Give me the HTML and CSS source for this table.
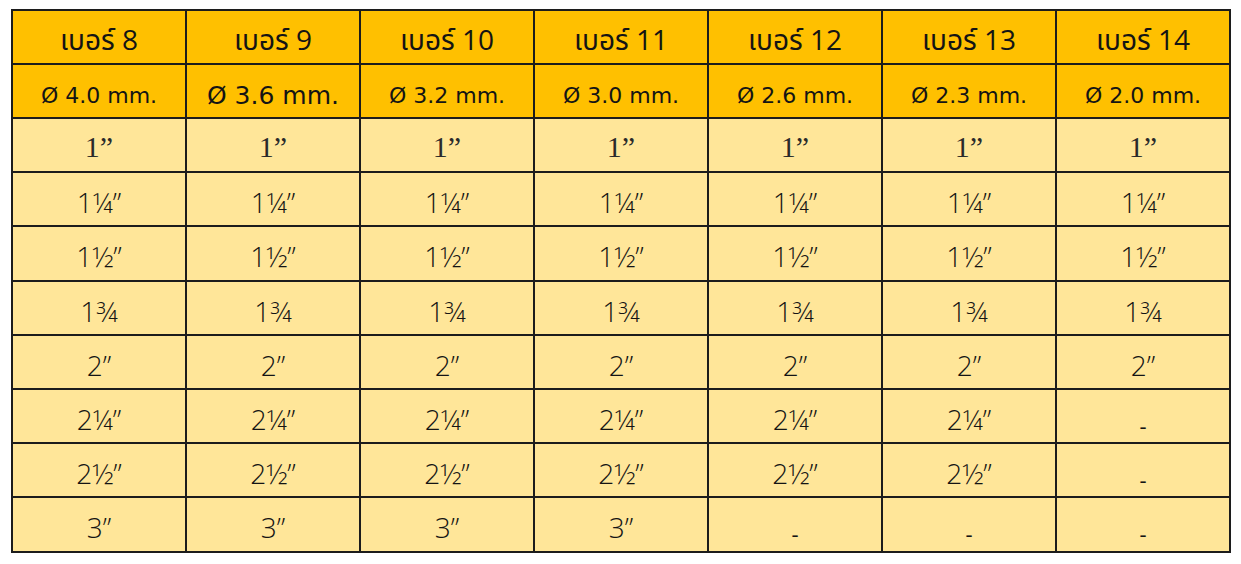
FILE: index.html
```html
<!DOCTYPE html>
<html lang="th">
<head>
<meta charset="utf-8">
<link rel="stylesheet" href="styles.css">
</head>
<body>
<table class="sizes">
  <colgroup>
    <col class="c"><col class="c"><col class="c"><col class="c"><col class="c"><col class="c"><col class="c">
  </colgroup>
  <thead>
    <tr class="num">
      <th>เบอร์ 8</th><th>เบอร์ 9</th><th>เบอร์ 10</th><th>เบอร์ 11</th><th>เบอร์ 12</th><th>เบอร์ 13</th><th>เบอร์ 14</th>
    </tr>
    <tr class="dia">
      <th>Ø 4.0 mm.</th><th class="big">Ø 3.6 mm.</th><th>Ø 3.2 mm.</th><th>Ø 3.0 mm.</th><th>Ø 2.6 mm.</th><th>Ø 2.3 mm.</th><th>Ø 2.0 mm.</th>
    </tr>
  </thead>
  <tbody>
    <tr><td class="serif">1”</td><td class="serif">1”</td><td class="serif">1”</td><td class="serif">1”</td><td class="serif">1”</td><td class="serif">1”</td><td class="serif">1”</td></tr>
    <tr><td>1¼”</td><td>1¼”</td><td>1¼”</td><td>1¼”</td><td>1¼”</td><td>1¼”</td><td>1¼”</td></tr>
    <tr><td>1½”</td><td>1½”</td><td>1½”</td><td>1½”</td><td>1½”</td><td>1½”</td><td>1½”</td></tr>
    <tr><td>1¾</td><td>1¾</td><td>1¾</td><td>1¾</td><td>1¾</td><td>1¾</td><td>1¾</td></tr>
    <tr><td>2”</td><td>2”</td><td>2”</td><td>2”</td><td>2”</td><td>2”</td><td>2”</td></tr>
    <tr><td>2¼”</td><td>2¼”</td><td>2¼”</td><td>2¼”</td><td>2¼”</td><td>2¼”</td><td class="dash">-</td></tr>
    <tr><td>2½”</td><td>2½”</td><td>2½”</td><td>2½”</td><td>2½”</td><td>2½”</td><td class="dash">-</td></tr>
    <tr><td>3”</td><td>3”</td><td>3”</td><td>3”</td><td class="dash">-</td><td class="dash">-</td><td class="dash">-</td></tr>
  </tbody>
</table>
</body>
</html>
```
FILE: styles.css
```css
html, body {
  margin: 0;
  padding: 0;
  background: #ffffff;
}
body {
  padding: 9px 0 0 11px;
  font-family: "Open Sans", "Noto Sans Thai", "Noto Sans", sans-serif;
  color: #141414;
}
.sizes {
  border-collapse: collapse;
  table-layout: fixed;
  width: 1217px;
}
.sizes .c {
  width: 174px;
}
.sizes th, .sizes td {
  border: 2px solid #1c1c1c;
  text-align: center;
  padding: 0;
  vertical-align: middle;
  box-sizing: border-box;
}
.sizes th {
  background: #ffc000;
  font-weight: 400;
}
.num th {
  height: 54px;
  font-size: 28px;
  padding-top: 8px;
}
.dia th {
  height: 54px;
  font-family: "DejaVu Sans", "Open Sans", sans-serif;
  font-size: 22px;
  padding-top: 8px;
}
.dia th.big {
  font-size: 25px;
}
.sizes td {
  background: #ffe699;
  height: 54.2px;
  font-size: 28px;
  padding-top: 6px;
  font-weight: 300;
}
.sizes td.serif {
  font-family: "Liberation Serif", serif;
  font-size: 30px;
  font-weight: 400;
  color: #2a2a2a;
  padding-top: 4px;
}
.sizes td.dash {
  font-size: 22px;
  font-weight: 400;
  padding-top: 18px;
}
```
